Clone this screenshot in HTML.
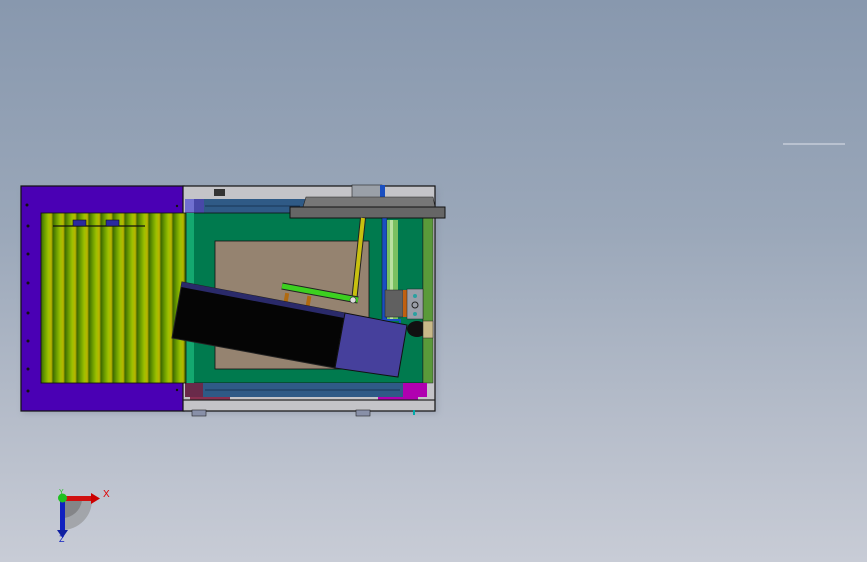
<!DOCTYPE html>
<html><head><meta charset="utf-8"><style>
html,body{margin:0;padding:0;width:867px;height:562px;overflow:hidden}
body{background:linear-gradient(180deg,#8898ae 0%,#9aa7b9 40%,#b6bdca 75%,#c8ccd6 100%)}
svg{position:absolute;left:0;top:0}
</style></head><body>
<svg width="867" height="562" viewBox="0 0 867 562" xmlns="http://www.w3.org/2000/svg">
<defs>
<linearGradient id="rl" x1="0" x2="1" y1="0" y2="0">
<stop offset="0" stop-color="#3e6a00"/><stop offset="0.3" stop-color="#6a9c00"/><stop offset="0.6" stop-color="#9cc000"/><stop offset="0.85" stop-color="#b8b400"/><stop offset="1" stop-color="#4a6a00"/>
</linearGradient>
<pattern id="rp" x="41" y="0" width="12" height="10" patternUnits="userSpaceOnUse">
<rect width="12" height="10" fill="url(#rl)"/>
</pattern>
<radialGradient id="sh" cx="0" cy="0" r="1"><stop offset="0" stop-color="#555" stop-opacity=".6"/><stop offset="1" stop-color="#888" stop-opacity=".2"/></radialGradient>
</defs>
<line x1="783" y1="144" x2="845" y2="144" stroke="#dfe3ea" stroke-width="1"/>
<!-- shadow -->
<rect x="22" y="188" width="416" height="226" fill="#7f8799" opacity=".35" filter="blur(3px)"/>
<!-- purple panel -->
<rect x="21" y="186" width="163" height="225" fill="#4a00b4" stroke="#111" stroke-width="1.2"/>
<g fill="#111"><circle cx="27" cy="205" r="1.5"/><circle cx="28" cy="226" r="1.5"/><circle cx="28" cy="254" r="1.5"/><circle cx="28" cy="283" r="1.5"/><circle cx="28" cy="313" r="1.5"/><circle cx="28" cy="341" r="1.5"/><circle cx="28" cy="369" r="1.5"/><circle cx="28" cy="391" r="1.5"/><circle cx="177" cy="206" r="1.2"/><circle cx="177" cy="390" r="1.2"/></g>
<!-- gray frame -->
<rect x="183" y="186" width="252" height="225" fill="#c4c4c8" stroke="#111" stroke-width="1.2"/>
<rect x="214" y="189" width="11" height="7" fill="#333"/>
<!-- top strips -->
<rect x="185" y="199" width="120" height="14" fill="#2f5a86"/>
<rect x="185" y="199" width="9" height="14" fill="#7070d0"/>
<rect x="194" y="199" width="10" height="14" fill="#4848a8"/>
<line x1="205" y1="206" x2="300" y2="206" stroke="#1a3555"/>
<!-- green interior -->
<rect x="186" y="213" width="237" height="170" fill="#007a4e" stroke="#111" stroke-width=".8"/>
<rect x="186" y="213" width="8" height="170" fill="#14a870"/>
<rect x="423" y="213" width="10" height="170" fill="#5a9a3a" stroke="#222" stroke-width=".5"/>
<!-- tan -->
<rect x="215" y="241" width="154" height="128" fill="#958370" stroke="#111" stroke-width=".8"/>
<!-- bottom strips -->
<rect x="185" y="383" width="235" height="14" fill="#2f5a86"/>
<rect x="185" y="383" width="18" height="14" fill="#6a2a4a"/>
<rect x="403" y="383" width="24" height="14" fill="#b000b0"/>
<line x1="205" y1="390" x2="400" y2="390" stroke="#1a3555"/>
<rect x="190" y="397" width="40" height="3" fill="#8a3050"/>
<rect x="378" y="397" width="40" height="3" fill="#b000b0"/>
<rect x="183" y="399" width="252" height="2" fill="#222" opacity=".6"/>
<!-- feet -->
<rect x="192" y="410" width="14" height="6" fill="#8890a8" stroke="#222" stroke-width=".6"/>
<rect x="356" y="410" width="14" height="6" fill="#8890a8" stroke="#222" stroke-width=".6"/>
<rect x="413" y="410" width="2" height="5" fill="#0aa"/>
<!-- rollers -->
<rect x="41" y="213" width="145" height="170" fill="url(#rp)" stroke="#111" stroke-width=".8"/>
<line x1="53" y1="226" x2="145" y2="226" stroke="#111" stroke-width="1.2"/>
<rect x="73" y="220" width="13" height="6" fill="#2a2aa0" stroke="#111" stroke-width=".6"/>
<rect x="106" y="220" width="13" height="6" fill="#2a2aa0" stroke="#111" stroke-width=".6"/>
<!-- right column parts -->
<rect x="352" y="185" width="30" height="13" fill="#9aa0a8" stroke="#222" stroke-width=".6"/>
<rect x="380" y="185" width="5" height="13" fill="#1a4fc0"/>
<polygon points="303,207 306,197 433,197 435,207" fill="#777" stroke="#222" stroke-width=".6"/>
<rect x="290" y="207" width="155" height="11" fill="#666" stroke="#111" stroke-width="1"/>
<rect x="382" y="218" width="5" height="117" fill="#1a4fc0" stroke="#112" stroke-width=".5"/>
<rect x="387" y="220" width="11" height="100" fill="#7ac060"/>
<rect x="390" y="220" width="3" height="100" fill="#b8e0a0"/>
<rect x="385" y="290" width="18" height="27" fill="#606060" stroke="#222" stroke-width=".5"/>
<rect x="403" y="290" width="4" height="27" fill="#c06010"/>
<rect x="407" y="289" width="16" height="30" fill="#9a9ea8" stroke="#222" stroke-width=".5"/>
<circle cx="415" cy="296" r="2" fill="#2aa0a0"/><circle cx="415" cy="305" r="3" fill="none" stroke="#222"/><circle cx="415" cy="314" r="2" fill="#2aa0a0"/>
<rect x="380" y="320" width="20" height="15" fill="none" stroke="#1a4fc0" stroke-width="2"/>
<ellipse cx="417" cy="329" rx="10" ry="8" fill="#111"/>
<rect x="423" y="321" width="10" height="17" fill="#c8b888" stroke="#222" stroke-width=".5"/>
<!-- links -->
<rect x="284" y="293" width="4" height="16" fill="#b06a10" transform="rotate(10 286 300)"/>
<rect x="306" y="296" width="4" height="16" fill="#b06a10" transform="rotate(10 308 304)"/>
<line x1="363" y1="218" x2="354" y2="302" stroke="#222" stroke-width="6"/>
<line x1="363" y1="218" x2="354" y2="302" stroke="#c8c010" stroke-width="4"/>
<line x1="282" y1="286" x2="358" y2="300" stroke="#222" stroke-width="7"/>
<line x1="282" y1="286" x2="358" y2="300" stroke="#3cd020" stroke-width="5"/>
<circle cx="353" cy="300" r="3" fill="#ddd" stroke="#333" stroke-width=".6"/>
<!-- black box -->
<polygon points="182,282 345,313 335,368 172,338" fill="#050505" stroke="#222" stroke-width="1"/>
<polygon points="182,282 345,313 344,318 181,287" fill="#2a2a6a"/>
<polygon points="345,313 407,325 398,377 335,368" fill="#46409c" stroke="#111" stroke-width="1"/>
<!-- triad -->
<path d="M62,497 L62,530 A30,30 0 0 0 92,500 Z" fill="#888" opacity=".55"/>
<path d="M62,497 L62,518 A20,20 0 0 0 82,500 Z" fill="#666" opacity=".5"/>
<rect x="61" y="496" width="30" height="5" fill="#d01010"/>
<polygon points="91,493 100,498.5 91,504" fill="#c00"/>
<rect x="60" y="498" width="5" height="32" fill="#1020c0"/>
<polygon points="57,530 68,530 62.5,538" fill="#1020a0"/>
<circle cx="62.5" cy="498" r="4.5" fill="#20c020"/>
<text x="103" y="497" font-family="Liberation Sans,sans-serif" font-size="10" fill="#e00000">X</text>
<text x="59" y="542" font-family="Liberation Sans,sans-serif" font-size="9" fill="#1020c0">Z</text>
<text x="59" y="494" font-family="Liberation Sans,sans-serif" font-size="7" fill="#20c020">Y</text>
</svg>
</body></html>
